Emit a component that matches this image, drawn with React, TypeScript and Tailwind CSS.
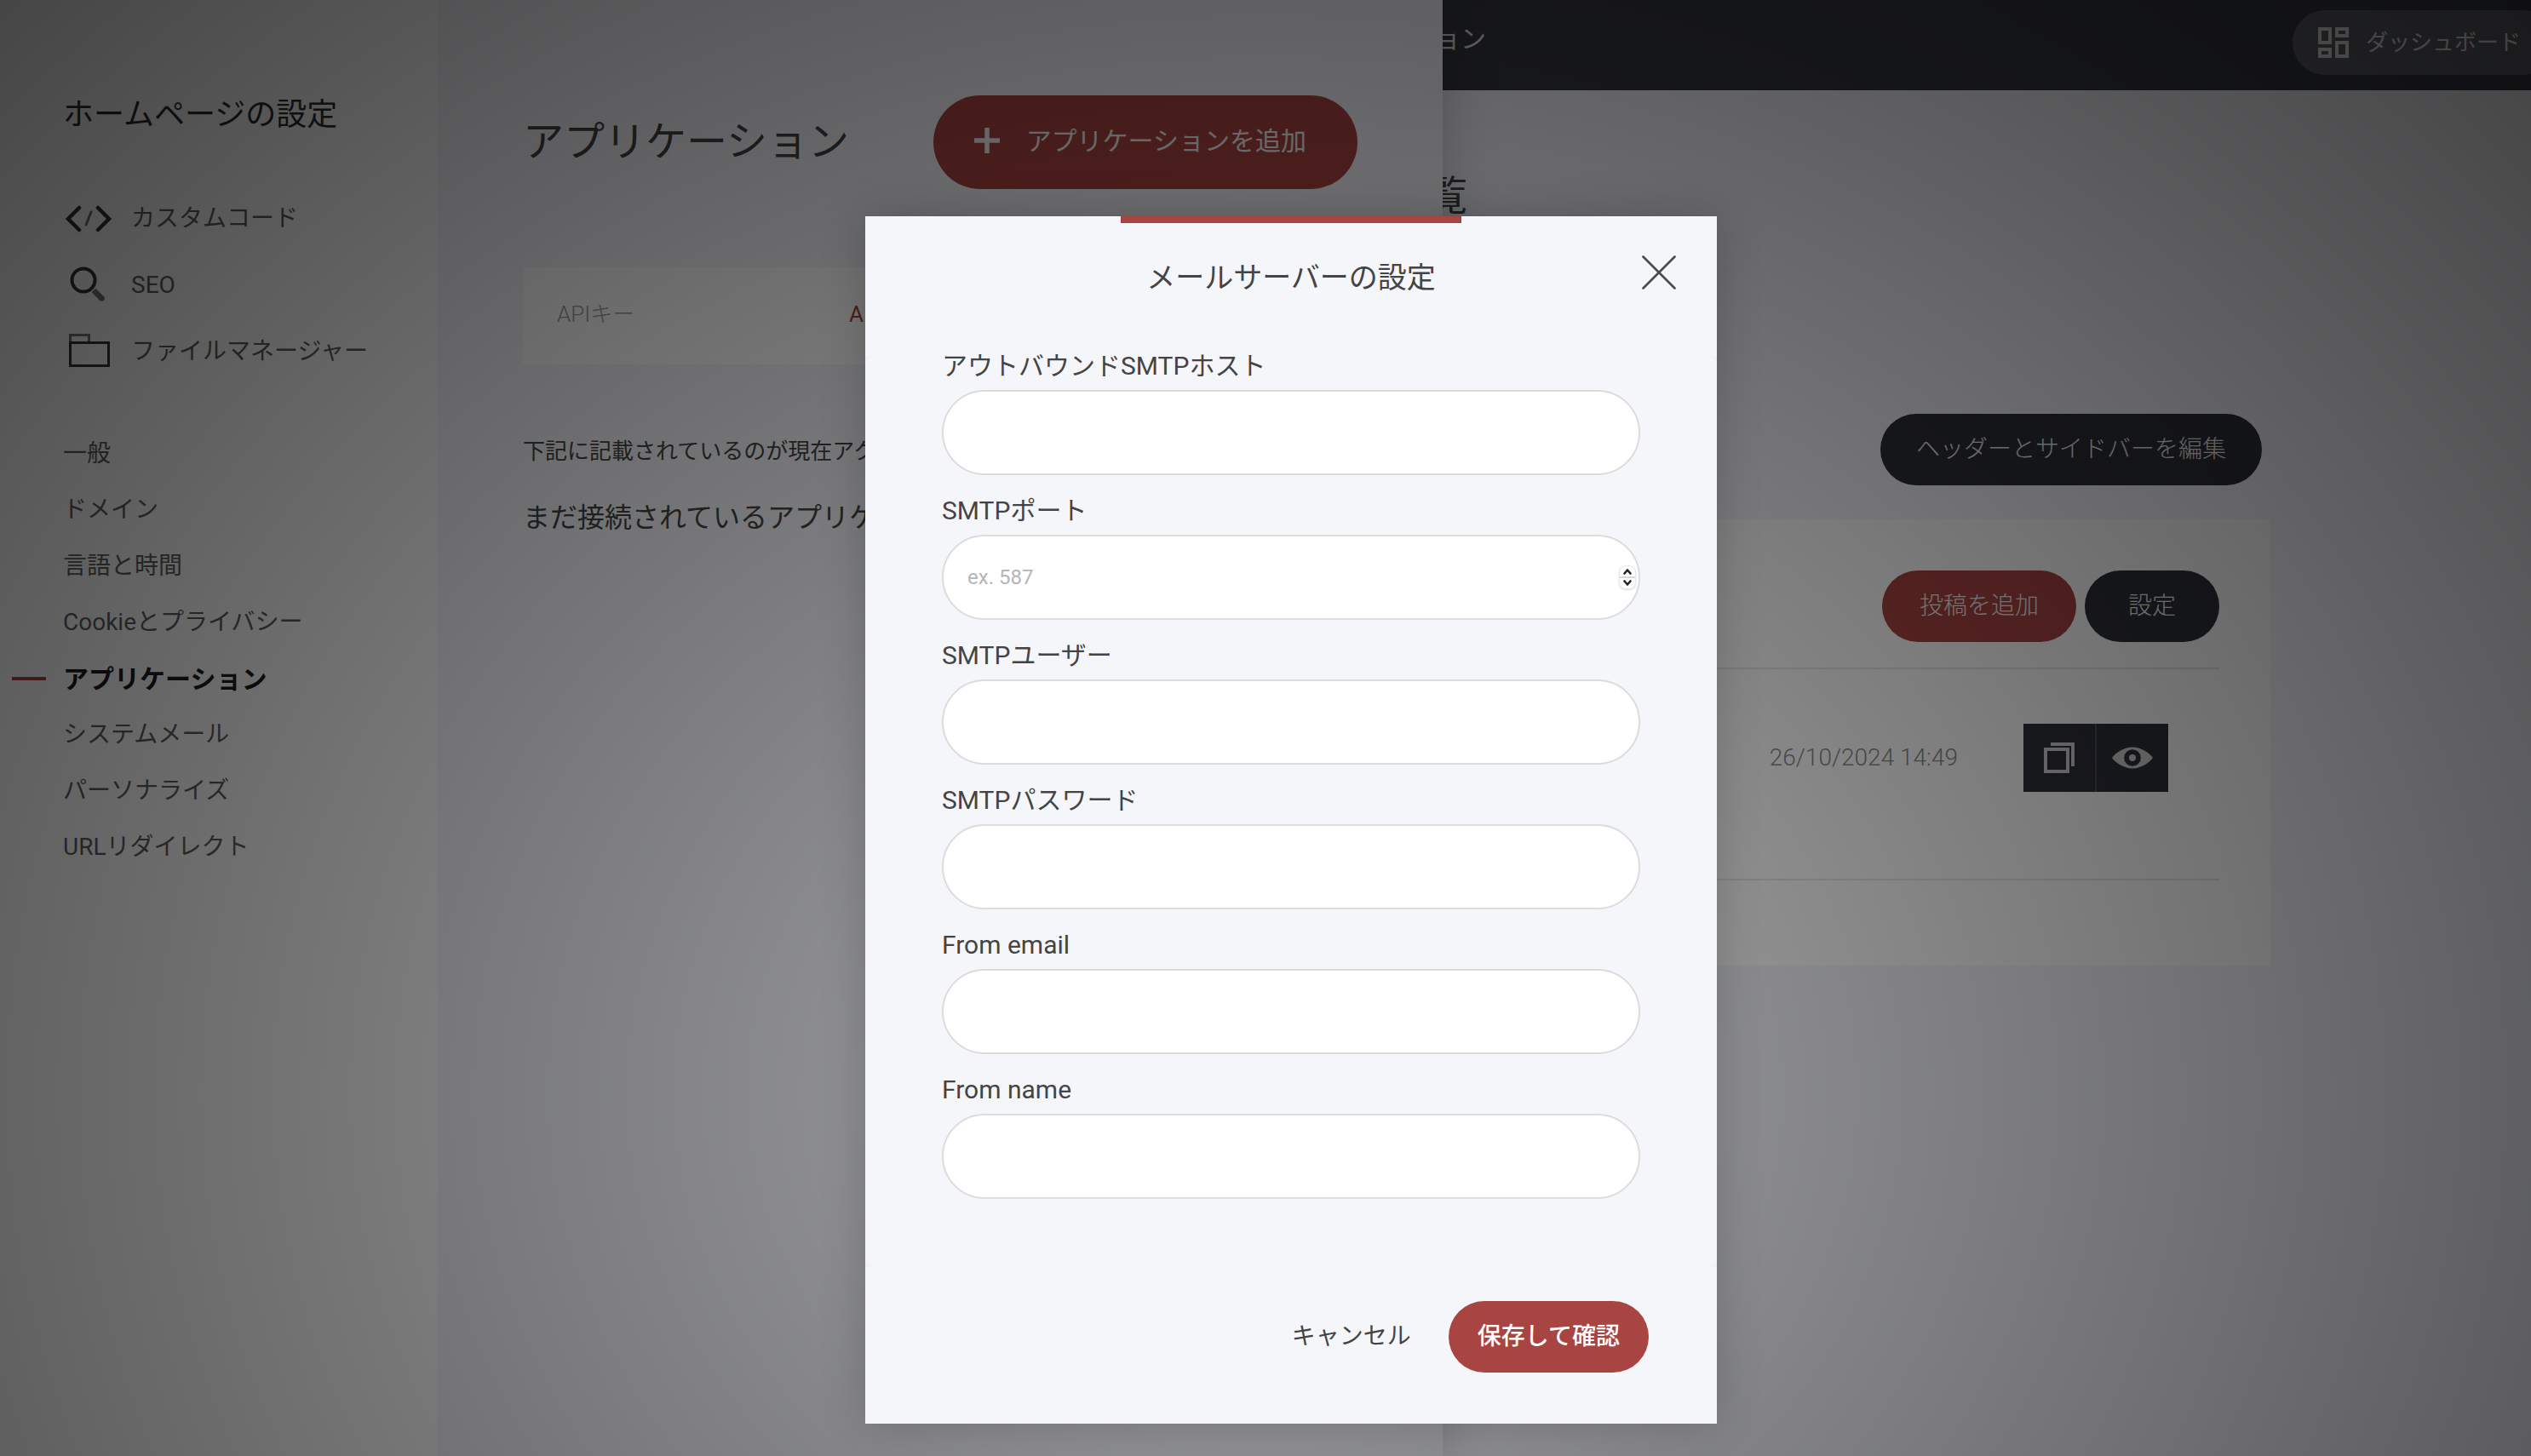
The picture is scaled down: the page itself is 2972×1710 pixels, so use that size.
import React from "react";

const primaryLinks = [
  { label: "カスタムコード", icon: <CodeIcon /> },
  { label: "SEO", icon: <SearchIcon /> },
  { label: "ファイルマネージャー", icon: <FolderIcon /> },
];

const secondaryLinks = [
  "一般",
  "ドメイン",
  "言語と時間",
  "Cookieとプライバシー",
  "アプリケーション",
  "システムメール",
  "パーソナライズ",
  "URLリダイレクト",
];

const fields = [
  { id: "smtp-host", label: "アウトバウンドSMTPホスト", type: "text" },
  { id: "smtp-port", label: "SMTPポート", type: "number", placeholder: "ex. 587" },
  { id: "smtp-user", label: "SMTPユーザー", type: "text" },
  { id: "smtp-password", label: "SMTPパスワード", type: "password" },
  { id: "from-email", label: "From email", type: "email" },
  { id: "from-name", label: "From name", type: "text" },
];

function CodeIcon() {
  return (
    <svg width="56" height="44" viewBox="0 0 56 44" fill="none" strokeLinecap="round">
      <path d="M17 9 L4 22 L17 35 M39 9 L52 22 L39 35" stroke="#34363e" strokeWidth="4.5" strokeLinejoin="miter" />
      <path d="M31 14 L25 29" stroke="#77787c" strokeWidth="3" />
    </svg>
  );
}

function SearchIcon() {
  return (
    <svg width="56" height="44" viewBox="0 0 56 44" fill="none">
      <circle cx="22" cy="16" r="13.5" stroke="#34363e" strokeWidth="4" />
      <path d="M34 28 L44 38" stroke="#77787c" strokeWidth="6.5" />
      <circle cx="43.5" cy="37.5" r="3.3" fill="#77787c" />
    </svg>
  );
}

function FolderIcon() {
  return (
    <svg width="56" height="44" viewBox="0 0 56 44" fill="none">
      <path d="M6.5 11 V2.5 H28.5 V11" stroke="#77787c" strokeWidth="3" />
      <rect x="6.5" y="11.5" width="45" height="27" stroke="#34363e" strokeWidth="3" />
    </svg>
  );
}

function DashboardIcon() {
  return (
    <svg width="36" height="36" viewBox="0 0 36 36" fill="none" stroke="#e4e4e4" strokeWidth="4">
      <rect x="2" y="2" width="12" height="16" />
      <rect x="22" y="2" width="12" height="8" />
      <rect x="2" y="26" width="12" height="8" />
      <rect x="22" y="18" width="12" height="16" />
    </svg>
  );
}

function CopyIcon() {
  return (
    <svg width="38" height="38" viewBox="0 0 38 38" fill="none" stroke="#d0d0d0" strokeWidth="4">
      <rect x="3" y="9" width="26" height="26" />
      <path d="M9 3 H35 V29" />
    </svg>
  );
}

function EyeIcon() {
  return (
    <svg width="50" height="28" viewBox="0 0 50 28">
      <path d="M1 14 C4 10 13 1.5 25 1.500 C37 1.500 46 10 49 14 C46 18 37 26.500 25 26.500 C13 26.500 4 18 1 14 Z" fill="#d0d0d0" />
      <circle cx="25" cy="14" r="9.8" fill="#2e3039" />
      <circle cx="25" cy="14" r="4" fill="#d0d0d0" />
    </svg>
  );
}

function Stepper() {
  return (
    <span className="pointer-events-none absolute right-[5px] top-9 flex h-7 w-5 items-center justify-center rounded-lg border border-gray-200 bg-white shadow">
      <svg width="18" height="28" viewBox="0 0 18 28" fill="none" stroke="#222" strokeWidth="2.6" strokeLinecap="round" strokeLinejoin="round">
        <path d="M5.5 9.5 L9 5.5 L12.5 9.5 M5.5 18.5 L9 22.5 L12.5 18.5" />
        <path d="M0 14 H18" stroke="#ccc" strokeWidth="1.5" />
      </svg>
    </span>
  );
}

function BlogPage() {
  return (
    <div className="min-h-screen bg-[#f5f6fa]">
      <header className="flex h-[106px] items-start justify-between bg-[#363842]">
        <p className="pl-[1655px] pt-[26px] text-[30px] leading-10 text-[#e4e4e4]">ション</p>
        <button className="-mr-7 mt-3 flex h-[76px] shrink-0 items-center gap-5 rounded-full bg-white/20 pl-[30px] pr-10 text-[26px] text-[#e4e4e4]">
          <DashboardIcon />
          <span>ダッシュボード</span>
        </button>
      </header>
      <h2 className="ml-[1627px] pt-[97px] text-5xl leading-[56px] text-[#444]">一覧</h2>
      <main className="ml-[1754px] mr-[306px]">
        <div className="flex justify-end pr-[10px] pt-[227px]">
          <button className="h-[84px] rounded-full bg-[#2e3039] px-[42px] text-[28px] font-light text-[#f2f2f2]">
            ヘッダーとサイドバーを編集
          </button>
        </div>
        <section className="mt-10 h-[524px] bg-white px-[60px] pt-[60px]">
          <div className="flex justify-end gap-[10px] border-b-2 border-[#e6e6e6] pb-[30px] font-light">
            <button className="h-[84px] rounded-full bg-[#a84442] px-11 text-[28px] text-[#f2f2f2]">投稿を追加</button>
            <button className="h-[84px] rounded-full bg-[#2e3039] px-[51px] text-[28px] text-[#f2f2f2]">設定</button>
          </div>
          <div className="flex h-[248px] items-start justify-end gap-[77px] border-b-2 border-[#e6e6e6] pr-[60px] pt-16">
            <time className="text-[28px] font-light leading-[80px] text-[#8a8a8a]">26/10/2024 14:49</time>
            <div className="flex h-20 w-[170px] divide-x-2 divide-[#4a4c55] bg-[#2e3039]">
              <button aria-label="複製" className="flex flex-1 items-center justify-center">
                <CopyIcon />
              </button>
              <button aria-label="表示" className="flex flex-1 items-center justify-center">
                <EyeIcon />
              </button>
            </div>
          </div>
        </section>
      </main>
    </div>
  );
}

function SettingsDrawer() {
  return (
    <div className="absolute inset-y-0 left-0 flex w-[57%] bg-[#f5f6fa] shadow-[0_0_60px_rgba(0,0,0,0.2)]">
      <aside className="w-[514px] shrink-0 bg-white pt-28">
        <h2 className="pl-[74px] text-4xl leading-[46px] text-[#2e2e2e]">ホームページの設定</h2>
        <nav className="pt-[60px] text-[28px] text-[#5e5e5e]">
          {primaryLinks.map((item) => (
            <a key={item.label} href="#" className="flex h-[78px] items-center gap-[22px] pl-[76px]">
              {item.icon}
              <span>{item.label}</span>
            </a>
          ))}
        </nav>
        <nav className="pt-12 text-[28px] text-[#5e5e5e]">
          {secondaryLinks.map((label) =>
            label === "アプリケーション" ? (
              <a key={label} href="#" aria-current="page" className="flex h-[66px] items-center gap-5 pl-[14px] text-[30px] font-bold text-[#1c1c20]">
                <span className="h-1 w-10 bg-[#a84442]" />
                <span>{label}</span>
              </a>
            ) : (
              <a key={label} href="#" className="flex h-[66px] items-center pl-[74px]">
                {label}
              </a>
            ),
          )}
        </nav>
      </aside>
      <main className="min-w-0 flex-1 pl-[100px] pr-[100px] pt-28">
        <div className="flex h-[110px] items-center justify-between">
          <h1 className="text-5xl leading-[56px] text-[#444]">アプリケーション</h1>
          <button className="flex h-[110px] items-center gap-[31px] rounded-full bg-[#a84442] pb-1 pl-12 pr-[60px] text-[30px] text-[#f2f2f2]">
            <svg width="30" height="30" viewBox="0 0 30 30" stroke="currentColor" strokeWidth="5.5">
              <path d="M15 0 V30 M0 15 H30" />
            </svg>
            <span>アプリケーションを追加</span>
          </button>
        </div>
        <div className="mt-[92px] flex h-[114px] items-center bg-white pb-1 pl-10 text-[26px] font-light text-[#999]">
          <span className="w-[343px]">APIキー</span>
          <a href="#" className="font-normal text-[#a84442]">A</a>
        </div>
        <p className="mt-[82px] text-[26px] leading-10 text-[#444]">下記に記載されているのが現在アク</p>
        <p className="mt-[38px] text-[32px] leading-10 text-[#444]">まだ接続されているアプリケ</p>
      </main>
    </div>
  );
}

function MailServerDialog() {
  return (
    <form
      role="dialog"
      aria-labelledby="dialog-title"
      className="relative w-[1000px] bg-[#f5f6fa] text-[#444] shadow-[0_0_50px_rgba(0,0,0,0.2)]"
    >
      <div className="mx-auto h-2 w-[400px] bg-[#a84442]" />
      <div className="h-[156px] pt-[42px] text-center">
        <h2 id="dialog-title" className="text-[34px] leading-[44px]">メールサーバーの設定</h2>
      </div>
      <button type="button" aria-label="閉じる" className="absolute right-12 top-[46px]">
        <svg width="40" height="40" viewBox="0 0 40 40" stroke="#4a4a4a" strokeWidth="2.6" strokeLinecap="round">
          <path d="M1.5 1.5 L38.5 38.5 M38.5 1.5 L1.5 38.5" />
        </svg>
      </button>
      <div className="bg-[#f2f2f2]">
        <div className="flex flex-col gap-[30px] rounded-xl bg-[#f5f6fa] px-[90px] pb-20">
          {fields.map((f) => (
            <div key={f.id}>
              <label htmlFor={f.id} className="mb-4 block text-[30px] leading-6">
                {f.label}
              </label>
              <div className="relative">
                <input
                  id={f.id}
                  type={f.type}
                  placeholder={f.placeholder}
                  className="block h-[100px] w-full appearance-none rounded-full border-2 border-[#dcdcdc] bg-white px-7 text-2xl outline-none [-moz-appearance:textfield] placeholder:text-[#b5b5b5] [&::-webkit-inner-spin-button]:appearance-none"
                />
                {f.type === "number" && <Stepper />}
              </div>
            </div>
          ))}
        </div>
      </div>
      <div className="flex items-center justify-end gap-11 px-20 pb-[60px] pt-10 text-[28px]">
        <button type="button">キャンセル</button>
        <button type="submit" className="h-[84px] rounded-full bg-[#a84442] px-[34px] font-medium text-white">
          保存して確認
        </button>
      </div>
    </form>
  );
}

export default function App() {
  return (
    <div className="relative min-h-screen overflow-hidden font-['Roboto','Noto_Sans_CJK_JP',sans-serif]">
      <BlogPage />
      <SettingsDrawer />
      <div className="absolute inset-0 flex items-start justify-center bg-[radial-gradient(71%_107%_at_50%_75%,rgba(0,0,0,0.33),rgba(0,0,0,0.73))] pl-[60px] pt-[254px]">
        <MailServerDialog />
      </div>
    </div>
  );
}
